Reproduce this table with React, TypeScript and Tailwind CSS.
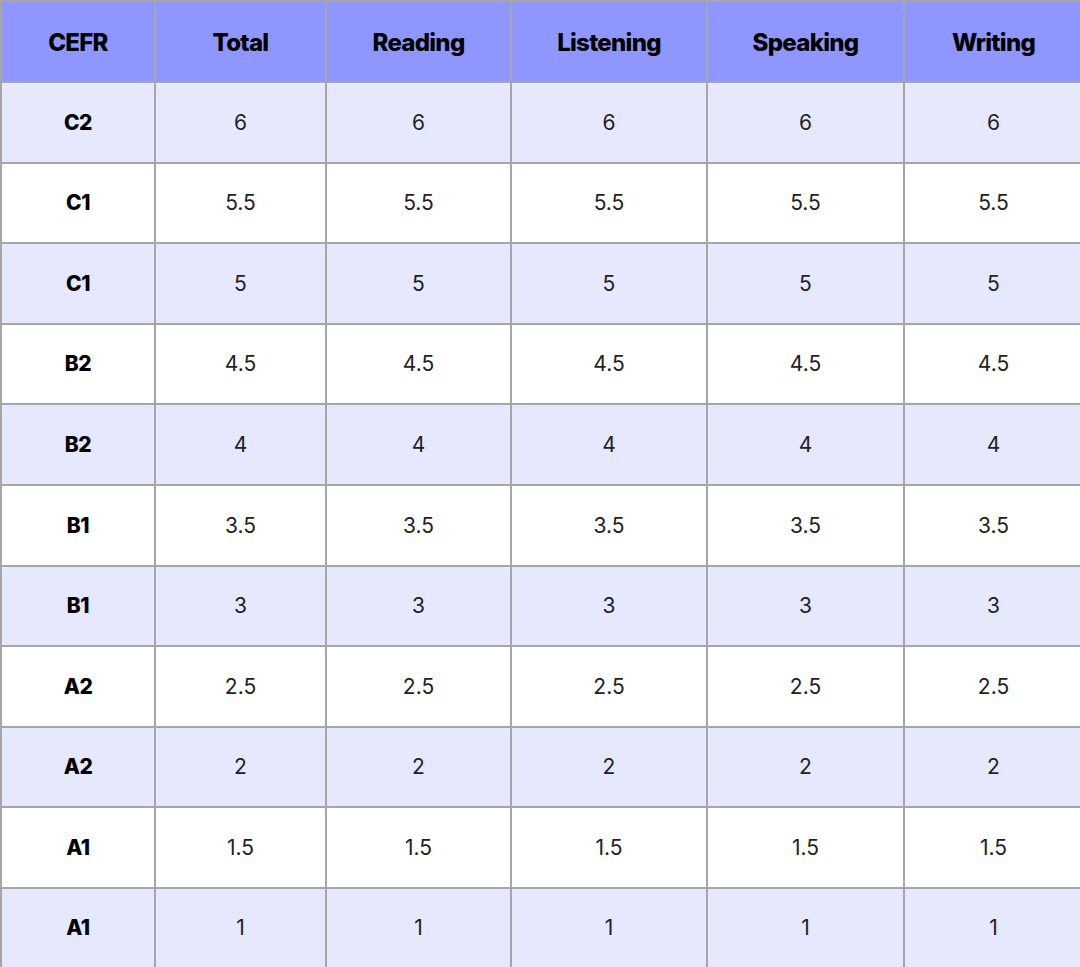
import React from "react";

const rows: [string, string][] = [
  ["C2", "6"],
  ["C1", "5.5"],
  ["C1", "5"],
  ["B2", "4.5"],
  ["B2", "4"],
  ["B1", "3.5"],
  ["B1", "3"],
  ["A2", "2.5"],
  ["A2", "2"],
  ["A1", "1.5"],
  ["A1", "1"],
];

const headers = ["CEFR", "Total", "Reading", "Listening", "Speaking", "Writing"];
const widths = ["w-[154px]", "w-[171px]", "w-[185px]", "w-[196px]", "w-[197px]", "w-[179px]"];

export default function App() {
  return (
    <div className="w-[1080px] h-[967px] overflow-hidden bg-white" style={{ fontFamily: "Inter, 'Noto Sans', sans-serif" }}>
      <table className="border-collapse table-fixed w-[1082px] text-black">
        <thead>
          <tr className="h-[81px] bg-[#9096ff]">
            {headers.map((h, i) => (
              <th key={h} className={`${widths[i]} border-2 border-[#a6a6a6] text-[24px] font-extrabold tracking-[-0.03em] text-center align-middle pt-[2px]`}>
                {h}
              </th>
            ))}
          </tr>
        </thead>
        <tbody>
          {rows.map(([label, v], r) => (
            <tr key={r} className={`h-[80.6px] ${r % 2 === 0 ? "bg-[#e6e8fe]" : "bg-white"}`}>
              <td className="border-2 border-[#a6a6a6] text-center align-middle text-[21px] font-extrabold tracking-[-0.02em]">{label}</td>
              {[0, 1, 2, 3, 4].map((c) => (
                <td key={c} className="border-2 border-[#a6a6a6] text-center align-middle text-[21px] font-normal text-[#222]">
                  {v}
                </td>
              ))}
            </tr>
          ))}
        </tbody>
      </table>
    </div>
  );
}
